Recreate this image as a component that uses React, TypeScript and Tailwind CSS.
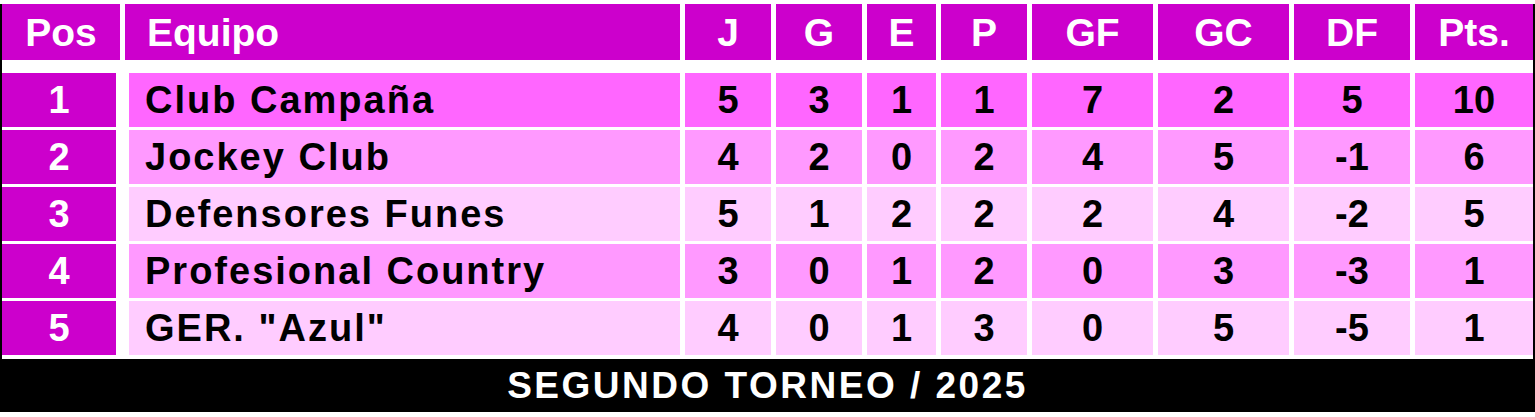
const rows = [
  { pos: 1, team: "Club Campaña", j: 5, g: 3, e: 1, p: 1, gf: 7, gc: 2, df: 5, pts: 10, bg: "bg-[#ff66ff]" },
  { pos: 2, team: "Jockey Club", j: 4, g: 2, e: 0, p: 2, gf: 4, gc: 5, df: -1, pts: 6, bg: "bg-[#ff99ff]" },
  { pos: 3, team: "Defensores Funes", j: 5, g: 1, e: 2, p: 2, gf: 2, gc: 4, df: -2, pts: 5, bg: "bg-[#ffccff]" },
  { pos: 4, team: "Profesional Country", j: 3, g: 0, e: 1, p: 2, gf: 0, gc: 3, df: -3, pts: 1, bg: "bg-[#ff99ff]" },
  { pos: 5, team: 'GER. "Azul"', j: 4, g: 0, e: 1, p: 3, gf: 0, gc: 5, df: -5, pts: 1, bg: "bg-[#ffccff]" },
];

const cols = "grid grid-cols-[118px_555px_86px_86px_69px_86px_121px_131px_116px_118px] gap-x-[5px]";

const headers = ["J", "G", "E", "P", "GF", "GC", "DF", "Pts."];

export default function App() {
  return (
    <div
      className="w-[1535px] h-[417px] bg-white pt-[4px] overflow-hidden leading-none"
      style={{ fontFamily: '"Liberation Sans", Arial, sans-serif' }}
    >
      <div className="border-x-2 border-black">
        {/* header */}
        <div className={`${cols} grid-rows-[56px] text-white font-bold text-[39px]`}>
          <div className="bg-[#cc00cc] flex items-center justify-center">Pos</div>
          <div className="bg-[#cc00cc] flex items-center pl-[22px]">Equipo</div>
          {headers.map((h) => (
            <div key={h} className="bg-[#cc00cc] flex items-center justify-center">
              {h}
            </div>
          ))}
        </div>

        <div className="h-[13px]" />

        <div className="flex flex-col gap-y-[3px] font-bold text-[38px]">
          {rows.map((r) => (
            <div key={r.pos} className={`${cols} grid-rows-[54px]`}>
              <div className="w-[114px] bg-[#cc00cc] text-white flex items-center justify-center">
                {r.pos}
              </div>
              <div className={`${r.bg} ml-[4px] flex items-center pl-[16px] tracking-[2px] text-black`}>
                {r.team}
              </div>
              {[r.j, r.g, r.e, r.p, r.gf, r.gc, r.df, r.pts].map((v, i) => (
                <div key={i} className={`${r.bg} flex items-center justify-center text-black`}>
                  {v}
                </div>
              ))}
            </div>
          ))}
        </div>

        <div className="h-[4px]" />
      </div>

      <div className="h-[53px] bg-black text-white font-bold text-[37px] tracking-[2.5px] flex items-center justify-center">
        SEGUNDO TORNEO / 2025
      </div>
    </div>
  );
}
